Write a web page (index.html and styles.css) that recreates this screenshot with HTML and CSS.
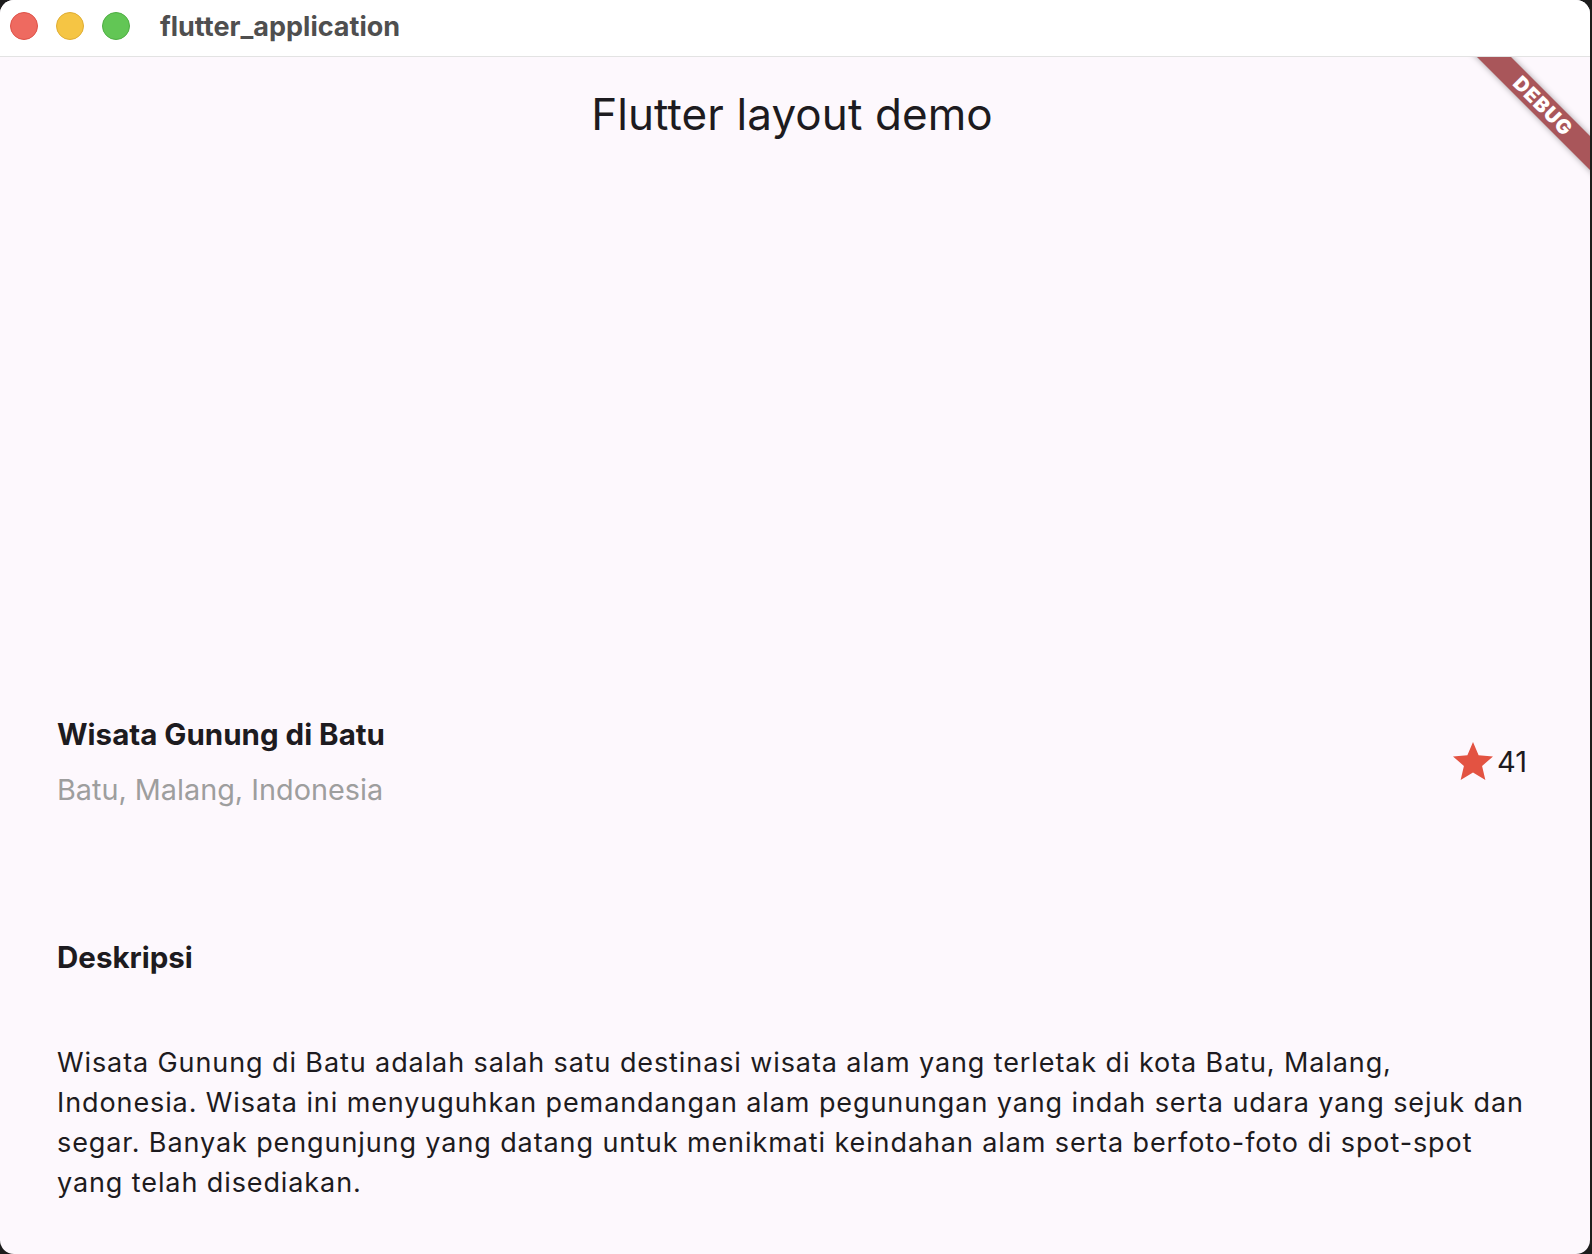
FILE: index.html
```html
<!DOCTYPE html>
<html lang="id">
<head>
<meta charset="utf-8">
<title>flutter_application</title>
<link rel="stylesheet" href="styles.css">
</head>
<body>
<div class="window">
  <header class="titlebar">
    <div class="lights">
      <span class="light red"></span>
      <span class="light yellow"></span>
      <span class="light green"></span>
    </div>
    <div class="wintitle">flutter_application</div>
  </header>
  <div class="app">
    <div class="appbar"><h1 class="apptitle">Flutter layout demo</h1></div>
    <div class="hero"></div>
    <section class="title-section">
      <div class="title-text">
        <div class="name">Wisata Gunung di Batu</div>
        <div class="loc">Batu, Malang, Indonesia</div>
      </div>
      <div class="rating">
        <svg class="star" viewBox="0 0 24 24" width="48" height="48" aria-hidden="true"><path d="M12 17.27L18.18 21l-1.64-7.03L22 9.24l-7.19-.61L12 2 9.19 8.63 2 9.24l5.46 4.73L5.82 21z"/></svg>
        <span class="count">41</span>
      </div>
    </section>
    <section class="desc">
      <h2 class="desc-title">Deskripsi</h2>
      <p class="desc-text">Wisata Gunung di Batu adalah salah satu destinasi wisata alam yang terletak di kota Batu, Malang, Indonesia. Wisata ini menyuguhkan pemandangan alam pegunungan yang indah serta udara yang sejuk dan segar. Banyak pengunjung yang datang untuk menikmati keindahan alam serta berfoto-foto di spot-spot yang telah disediakan.</p>
    </section>
    <div class="banner">DEBUG</div>
  </div>
</div>
</body>
</html>
```

FILE: styles.css
```css
html, body {
  margin: 0;
  padding: 0;
}
body {
  width: 1592px;
  height: 1254px;
  background: #1c1c1c;
  overflow: hidden;
  font-family: Inter, "Noto Sans", sans-serif;
}
.window {
  width: 1590px;
  height: 1254px;
  border-radius: 14px;
  overflow: hidden;
  background: #fdf8fd;
  display: flex;
  flex-direction: column;
}
.titlebar {
  height: 57px;
  flex: 0 0 57px;
  box-sizing: border-box;
  padding-bottom: 4px;
  background: #ffffff;
  border-bottom: 1px solid #e3e3e3;
  display: flex;
  align-items: center;
}
.lights {
  display: flex;
  gap: 18px;
  padding-left: 10px;
}
.light {
  width: 28px;
  height: 28px;
  border-radius: 50%;
  box-sizing: border-box;
}
.light.red { background: #ee6a60; border: 1px solid #dd5147; }
.light.yellow { background: #f5c544; border: 1px solid #dfad33; }
.light.green { background: #62c655; border: 1px solid #4eae43; }
.wintitle {
  margin-left: 30px;
  font-family: Inter, "Liberation Sans", sans-serif;
  font-weight: 700;
  font-size: 27px;
  color: #4f4f4f;
}
.app {
  position: relative;
  flex: 1;
  overflow: hidden;
  color: #1d1b20;
}
.appbar {
  height: 100px;
  display: flex;
  justify-content: center;
  padding-right: 6px;
}
.apptitle {
  margin: 0;
  padding-top: 15px;
  font-size: 44px;
  font-weight: 400;
  line-height: 85px;
  letter-spacing: 0.1px;
}
.hero {
  height: 500px;
}
.title-section {
  display: flex;
  align-items: center;
  padding: 57px 63px 57px 57px;
}
.title-text {
  flex: 1;
  display: flex;
  flex-direction: column;
  gap: 16px;
}
.name {
  font-size: 29.5px;
  font-weight: 700;
  line-height: 40px;
}
.loc {
  font-size: 28.8px;
  line-height: 40px;
  color: #9e9e9e;
}
.rating {
  display: flex;
  align-items: center;
}
.star {
  fill: #e35342;
  display: block;
}
.count {
  font-size: 29px;
  line-height: 40px;
}
.desc {
  padding: 70px 57px 0;
}
.desc-title {
  margin: 0;
  font-size: 29.5px;
  font-weight: 700;
  line-height: 40px;
}
.desc-text {
  margin: 66px 0 0;
  font-size: 27px;
  line-height: 40px;
  letter-spacing: 0.9px;
}
.banner {
  position: absolute;
  left: 1433px;
  top: 37px;
  width: 220px;
  height: 24px;
  transform: rotate(45deg);
  background: #a9565a;
  box-shadow: 0 0 6px rgba(0, 0, 0, 0.35);
  color: #ffffff;
  font-weight: 900;
  font-size: 20px;
  line-height: 24px;
  letter-spacing: 1px;
  text-align: center;
}
```
